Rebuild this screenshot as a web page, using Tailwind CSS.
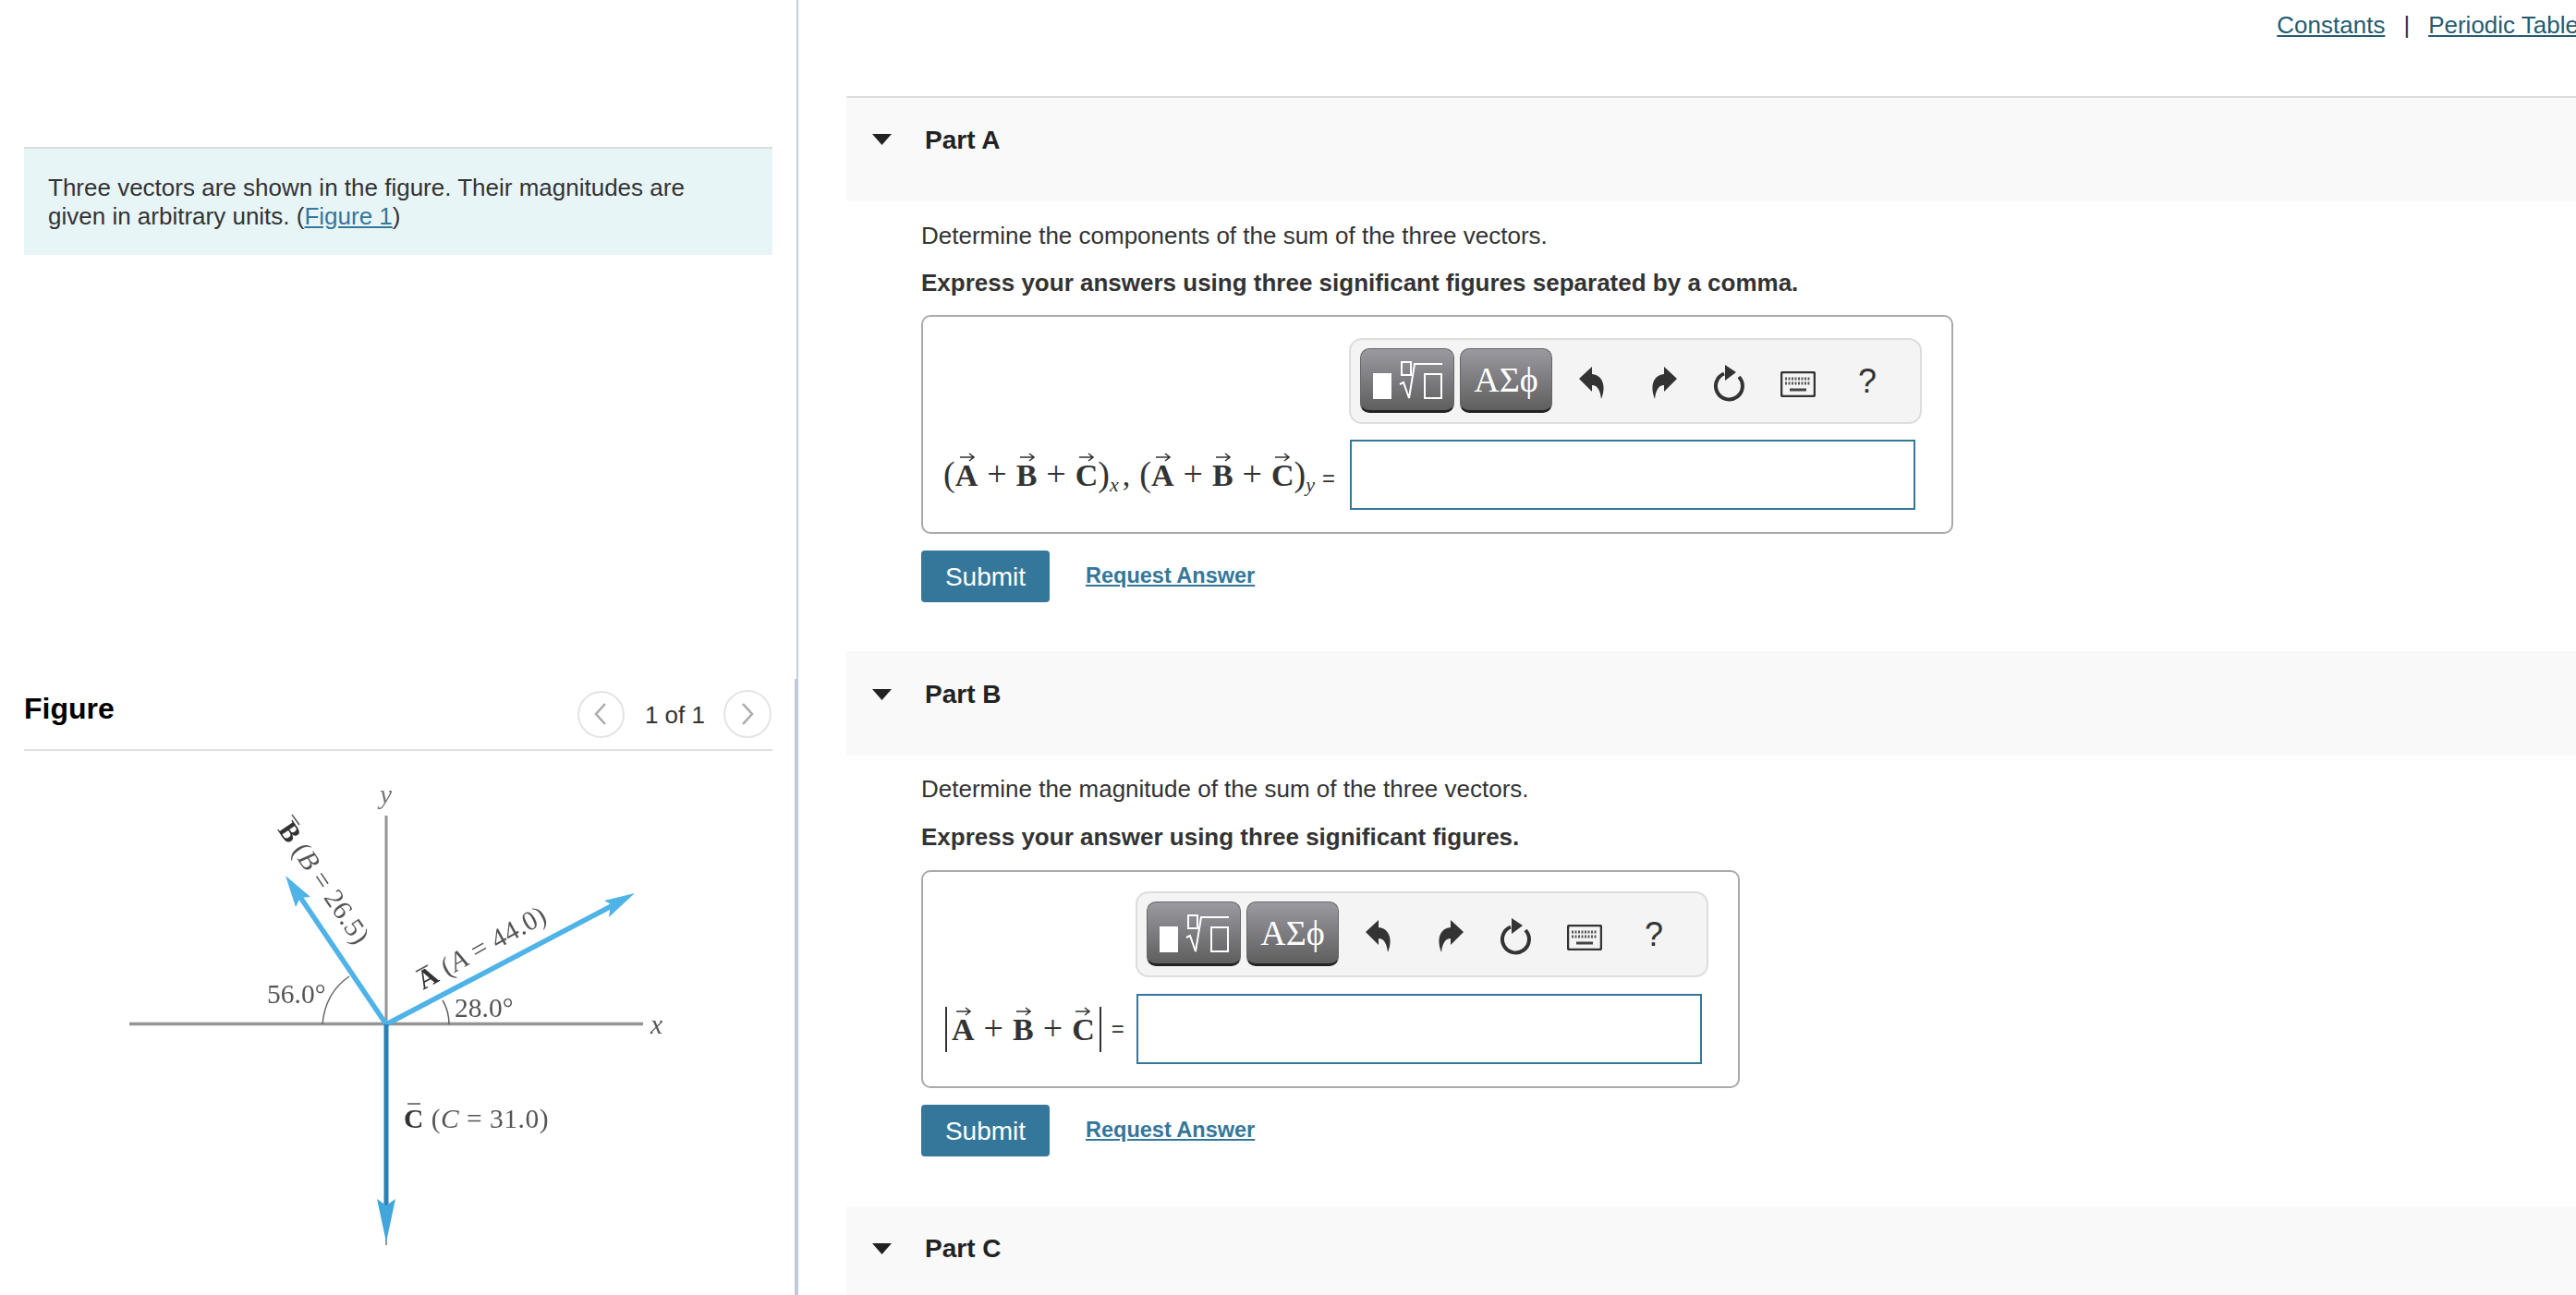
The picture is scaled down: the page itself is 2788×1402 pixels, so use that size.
<!DOCTYPE html>
<html lang="en">
<head>
<meta charset="utf-8">
<title>Vectors</title>
<script src="https://cdn.jsdelivr.net/npm/@tailwindcss/browser@4"></script>
</head>
<body class="bg-white">
<div class="flex h-[1402px] w-[2788px] overflow-hidden font-['Liberation_Sans',Arial,sans-serif] text-[#333]">
  <aside class="flex w-[864px] shrink-0 flex-col">
    <section class="h-[735px] border-r-2 border-[#c3cddd] pl-[26px] pt-[159px]">
      <div class="h-[117px] w-[810px] border-t-2 border-[#ddd] bg-[#e8f5f7] pl-[26px] pt-[27px] text-[26px] leading-[31px]">
        Three vectors are shown in the figure. Their magnitudes are<br>given in arbitrary units. (<a class="text-[#35779a] underline">Figure 1</a>)
      </div>
    </section>
    <section class="flex-1 border-r-4 border-[#bdcadd] pl-[26px]">
      <div class="flex h-[78px] w-[810px] items-start justify-between border-b-2 border-[#e0e0e0]">
        <h2 class="mt-[12px] text-[32px] font-bold leading-[40px] text-black">Figure</h2>
        <div class="mt-[12px] flex items-center text-[26px]">
          <span class="flex size-[51px] items-center justify-center rounded-full border-2 border-[#e4e4e4]">
            <svg width="16" height="26" viewBox="0 0 16 26" fill="none" stroke="#aaa" stroke-width="2.5"><path d="M13 2 3 13l10 11"/></svg>
          </span>
          <span class="ml-[22px] mr-[20px] mt-[2px]">1 of 1</span>
          <span class="mr-[1px] flex size-[52px] items-center justify-center rounded-full border-2 border-[#e4e4e4]">
            <svg width="16" height="26" viewBox="0 0 16 26" fill="none" stroke="#aaa" stroke-width="2.5"><path d="m3 2 10 11L3 24"/></svg>
          </span>
        </div>
      </div>
      <svg class="blur-[0.5px]" width="810" height="560" viewBox="26 813 810 560" font-family="'Liberation Serif',serif" font-size="29.5" fill="#555">
        <path d="M140 1108.500H696" stroke="#949494" stroke-width="3.500"/>
        <path d="M418 883V1109" stroke="#949494" stroke-width="3"/>
        <path d="M418 1300V1348" stroke="#949494" stroke-width="2"/>
        <path d="M349 1109C351 1085 362 1068 378 1057" fill="none" stroke="#666" stroke-width="1.500"/>
        <path d="M479 1083C484 1091 486 1100 486 1109" fill="none" stroke="#666" stroke-width="1.500"/>
        <path d="M418 1109 675 974" stroke="#4fb3e8" stroke-width="5.500"/>
        <path d="M687 967 654 975 661 979 659 993Z" fill="#4fb3e8"/>
        <path d="M418 1109 316 958" stroke="#4fb3e8" stroke-width="5.500"/>
        <path d="M309 948 336 971 325 972 320 982Z" fill="#4fb3e8"/>
        <path d="M418 1109V1320" stroke="#2c80b4" stroke-width="5"/>
        <path d="M418 1345 408 1298 418 1305 428 1298Z" fill="#42a5dc"/>
        <text x="411" y="870" font-style="italic" fill="#777">y</text>
        <text x="704" y="1119" font-style="italic">x</text>
        <text x="289" y="1086">56.0°</text>
        <text x="492" y="1101">28.0°</text>
        <text transform="translate(458 1072) rotate(-29)" letter-spacing="0.5"><tspan font-weight="bold" fill="#333">A</tspan> (<tspan font-style="italic">A</tspan> = 44.0)</text>
        <path d="M450 1052 463 1045" stroke="#555" stroke-width="1.500"/>
        <text transform="translate(300 898) rotate(56)" letter-spacing="0.4"><tspan font-weight="bold" fill="#333">B</tspan> (<tspan font-style="italic">B</tspan> = 26.5)</text>
        <path d="M316 882 324 893" stroke="#555" stroke-width="1.500"/>
        <text x="437" y="1221" letter-spacing="0.5"><tspan font-weight="bold" fill="#333">C</tspan> (<tspan font-style="italic">C</tspan> = 31.0)</text>
        <path d="M441 1195H455" stroke="#555" stroke-width="1.500"/>
      </svg>
    </section>
  </aside>

  <main class="min-w-0 flex-1 pl-[52px]">
    <div class="mr-[-3px] flex h-[104px] items-start justify-end gap-[20px] pt-[11px] text-[26px] leading-[32px] text-[#255b70]">
      <a class="underline">Constants</a><span class="text-[#333]">|</span><a class="underline">Periodic Table</a>
    </div>

    <!-- Part A -->
    <section class="h-[601px]">
      <header class="flex h-[114px] items-start border-t-2 border-[#ddd] bg-[#f9f9f9] pl-[28px] pt-[29px]">
        <svg class="mt-[10px]" width="21" height="12" viewBox="0 0 21 12"><path d="M0 0H21L10.500 12Z" fill="#222"/></svg>
        <h3 class="ml-[36px] mt-[1px] text-[28px] font-bold leading-[32px] text-[#222]">Part A</h3>
      </header>
      <div class="pl-[81px]">
        <p class="mt-[21px] text-[26px] leading-[32px]">Determine the components of the sum of the three vectors.</p>
        <p class="mt-[19px] text-[26px] font-bold leading-[32px]">Express your answers using three significant figures separated by a comma.</p>
        <div class="mt-[19px] h-[237px] w-[1117px] rounded-[10px] border-2 border-[#aaa] pt-[23px]">
          <div class="ml-[461px] flex h-[93px] w-[620px] items-start rounded-[14px] border-2 border-[#ddd] bg-[#f4f4f4] pl-[10px] pt-[9px]">
            <span class="flex h-[70px] w-[102px] items-center justify-center rounded-[10px] border border-[#666] border-b-[3px] border-b-[#222] bg-linear-to-b from-[#9b9aa1] to-[#5f5f5f]">
              <svg width="75" height="41" viewBox="0 0 75 41"><path d="M0 13H20V41H0Z" fill="#fff"/><path d="M31 1H41V15H31ZM29 25l4-2 6 17 6-37H75M56 14H74V40H56Z" fill="none" stroke="#fff" stroke-width="2"/></svg>
            </span>
            <span class="ml-[6px] flex h-[70px] w-[100px] items-center justify-center rounded-[10px] border border-[#666] border-b-[3px] border-b-[#222] bg-linear-to-b from-[#9b9aa1] to-[#5f5f5f] font-['Liberation_Serif',serif] text-[38px] text-white">ΑΣϕ</span>
            <svg class="ml-[29px] mt-[20px]" width="28" height="36" viewBox="0 0 28 36"><path d="M0 13 14 0V8C25 9 30 20 24 35 23 26 20 20 14 20V27Z" fill="#333"/></svg>
            <svg class="ml-[50px] mt-[20px]" width="28" height="36" viewBox="0 0 28 36"><path d="M28 13 14 0V8C3 9-2 20 4 35 5 26 8 20 14 20V27Z" fill="#333"/></svg>
            <svg class="ml-[39px] mt-[17px]" width="34" height="44" viewBox="0 0 34 44"><path d="M12 10.500A14.500 14.500 0 1 0 28 14" fill="none" stroke="#333" stroke-width="4"/><path d="M13 1 25 9 13 18Z" fill="#333"/></svg>
            <svg class="ml-[39px] mt-[25px]" width="38" height="28" viewBox="0 0 38 28"><rect x="1" y="1" width="36" height="26" rx="2" fill="#f4f4f4" stroke="#333" stroke-width="2.500"/><path d="M5 8H33M5 13H33" stroke="#555" stroke-width="3" stroke-dasharray="2 1.500"/><path d="M10 20H28" stroke="#444" stroke-width="3"/></svg>
            <span class="ml-[46px] mt-[14px] text-[36px] leading-[44px]">?</span>
          </div>
          <div class="mt-[17px] flex items-center pl-[22px]">
            <div class="flex h-[76px] w-[440px] items-center">
              <div class="mt-[-2px] flex items-baseline font-['Liberation_Serif',serif] text-[34px] font-bold leading-none text-[#333]">
                <span class="text-[38px] font-normal">(</span>
                <span class="relative">A<svg class="absolute left-[5px] top-[-8px]" width="16" height="10" viewBox="0 0 16 10"><path d="M0 5H15M10 1l5 4-5 4" fill="none" stroke="#333" stroke-width="1.500"/></svg></span>
                <span class="mx-[10px] text-[38px] font-normal">+</span>
                <span class="relative">B<svg class="absolute left-[4px] top-[-8px]" width="16" height="10" viewBox="0 0 16 10"><path d="M0 5H15M10 1l5 4-5 4" fill="none" stroke="#333" stroke-width="1.500"/></svg></span>
                <span class="mx-[10px] text-[38px] font-normal">+</span>
                <span class="relative">C<svg class="absolute left-[4px] top-[-8px]" width="16" height="10" viewBox="0 0 16 10"><path d="M0 5H15M10 1l5 4-5 4" fill="none" stroke="#333" stroke-width="1.500"/></svg></span>
                <span class="text-[38px] font-normal">)</span>
                <span class="translate-y-[6px] text-[22px] font-normal italic">x</span>
                <span class="ml-[4px] font-normal">,</span>
                <span class="ml-[10px] text-[38px] font-normal">(</span>
                <span class="relative">A<svg class="absolute left-[5px] top-[-8px]" width="16" height="10" viewBox="0 0 16 10"><path d="M0 5H15M10 1l5 4-5 4" fill="none" stroke="#333" stroke-width="1.500"/></svg></span>
                <span class="mx-[10px] text-[38px] font-normal">+</span>
                <span class="relative">B<svg class="absolute left-[4px] top-[-8px]" width="16" height="10" viewBox="0 0 16 10"><path d="M0 5H15M10 1l5 4-5 4" fill="none" stroke="#333" stroke-width="1.500"/></svg></span>
                <span class="mx-[10px] text-[38px] font-normal">+</span>
                <span class="relative">C<svg class="absolute left-[4px] top-[-8px]" width="16" height="10" viewBox="0 0 16 10"><path d="M0 5H15M10 1l5 4-5 4" fill="none" stroke="#333" stroke-width="1.500"/></svg></span>
                <span class="text-[38px] font-normal">)</span>
                <span class="translate-y-[6px] text-[22px] font-normal italic">y</span>
                <span class="ml-[8px] font-['Liberation_Sans',sans-serif] text-[24px] font-normal">=</span>
              </div>
            </div>
            <div class="h-[76px] w-[612px] border-2 border-[#35779a] bg-white"></div>
          </div>
        </div>
        <div class="mt-[18px] flex items-center">
          <button class="h-[56px] w-[139px] rounded-[4px] bg-[#35779a] pt-[2px] text-[28px] text-white">Submit</button>
          <a class="ml-[39px] text-[23.5px] font-bold text-[#35779a] underline">Request Answer</a>
        </div>
      </div>
    </section>

    <!-- Part B -->
    <section class="h-[601px]">
      <header class="flex h-[113px] items-start bg-[#f9f9f9] pl-[28px] pt-[31px]">
        <svg class="mt-[10px]" width="21" height="12" viewBox="0 0 21 12"><path d="M0 0H21L10.500 12Z" fill="#222"/></svg>
        <h3 class="ml-[36px] text-[28px] font-bold leading-[32px] text-[#222]">Part B</h3>
      </header>
      <div class="pl-[81px]">
        <p class="mt-[20px] text-[26px] leading-[32px]">Determine the magnitude of the sum of the three vectors.</p>
        <p class="mt-[20px] text-[26px] font-bold leading-[32px]">Express your answer using three significant figures.</p>
        <div class="mt-[20px] h-[236px] w-[886px] rounded-[10px] border-2 border-[#aaa] pt-[21px]">
          <div class="ml-[230px] flex h-[93px] w-[620px] items-start rounded-[14px] border-2 border-[#ddd] bg-[#f4f4f4] pl-[10px] pt-[9px]">
            <span class="flex h-[70px] w-[102px] items-center justify-center rounded-[10px] border border-[#666] border-b-[3px] border-b-[#222] bg-linear-to-b from-[#9b9aa1] to-[#5f5f5f]">
              <svg width="75" height="41" viewBox="0 0 75 41"><path d="M0 13H20V41H0Z" fill="#fff"/><path d="M31 1H41V15H31ZM29 25l4-2 6 17 6-37H75M56 14H74V40H56Z" fill="none" stroke="#fff" stroke-width="2"/></svg>
            </span>
            <span class="ml-[6px] flex h-[70px] w-[100px] items-center justify-center rounded-[10px] border border-[#666] border-b-[3px] border-b-[#222] bg-linear-to-b from-[#9b9aa1] to-[#5f5f5f] font-['Liberation_Serif',serif] text-[38px] text-white">ΑΣϕ</span>
            <svg class="ml-[29px] mt-[20px]" width="28" height="36" viewBox="0 0 28 36"><path d="M0 13 14 0V8C25 9 30 20 24 35 23 26 20 20 14 20V27Z" fill="#333"/></svg>
            <svg class="ml-[50px] mt-[20px]" width="28" height="36" viewBox="0 0 28 36"><path d="M28 13 14 0V8C3 9-2 20 4 35 5 26 8 20 14 20V27Z" fill="#333"/></svg>
            <svg class="ml-[39px] mt-[17px]" width="34" height="44" viewBox="0 0 34 44"><path d="M12 10.500A14.500 14.500 0 1 0 28 14" fill="none" stroke="#333" stroke-width="4"/><path d="M13 1 25 9 13 18Z" fill="#333"/></svg>
            <svg class="ml-[39px] mt-[25px]" width="38" height="28" viewBox="0 0 38 28"><rect x="1" y="1" width="36" height="26" rx="2" fill="#f4f4f4" stroke="#333" stroke-width="2.500"/><path d="M5 8H33M5 13H33" stroke="#555" stroke-width="3" stroke-dasharray="2 1.500"/><path d="M10 20H28" stroke="#444" stroke-width="3"/></svg>
            <span class="ml-[46px] mt-[14px] text-[36px] leading-[44px]">?</span>
          </div>
          <div class="mt-[18px] flex items-center pl-[24px]">
            <div class="flex h-[76px] w-[207px] items-center">
              <span class="h-[49px] w-[2px] bg-[#333]"></span>
              <div class="mt-[-2px] flex items-baseline font-['Liberation_Serif',serif] text-[34px] font-bold leading-none text-[#333]">
                <span class="relative ml-[5px]">A<svg class="absolute left-[5px] top-[-8px]" width="16" height="10" viewBox="0 0 16 10"><path d="M0 5H15M10 1l5 4-5 4" fill="none" stroke="#333" stroke-width="1.500"/></svg></span>
                <span class="mx-[10px] text-[38px] font-normal">+</span>
                <span class="relative">B<svg class="absolute left-[4px] top-[-8px]" width="16" height="10" viewBox="0 0 16 10"><path d="M0 5H15M10 1l5 4-5 4" fill="none" stroke="#333" stroke-width="1.500"/></svg></span>
                <span class="mx-[10px] text-[38px] font-normal">+</span>
                <span class="relative">C<svg class="absolute left-[4px] top-[-8px]" width="16" height="10" viewBox="0 0 16 10"><path d="M0 5H15M10 1l5 4-5 4" fill="none" stroke="#333" stroke-width="1.500"/></svg></span>
              </div>
              <span class="ml-[5px] h-[49px] w-[2px] bg-[#333]"></span>
              <span class="ml-[11px] text-[24px] leading-none">=</span>
            </div>
            <div class="h-[76px] w-[612px] border-2 border-[#35779a] bg-white"></div>
          </div>
        </div>
        <div class="mt-[18px] flex items-center">
          <button class="h-[56px] w-[139px] rounded-[4px] bg-[#35779a] pt-[2px] text-[28px] text-white">Submit</button>
          <a class="ml-[39px] text-[23.5px] font-bold text-[#35779a] underline">Request Answer</a>
        </div>
      </div>
    </section>

    <!-- Part C -->
    <section>
      <header class="flex h-[113px] items-start bg-[#f9f9f9] pl-[28px] pt-[30px]">
        <svg class="mt-[10px]" width="21" height="12" viewBox="0 0 21 12"><path d="M0 0H21L10.500 12Z" fill="#222"/></svg>
        <h3 class="ml-[36px] text-[28px] font-bold leading-[32px] text-[#222]">Part C</h3>
      </header>
    </section>
  </main>
</div>
</body>
</html>
